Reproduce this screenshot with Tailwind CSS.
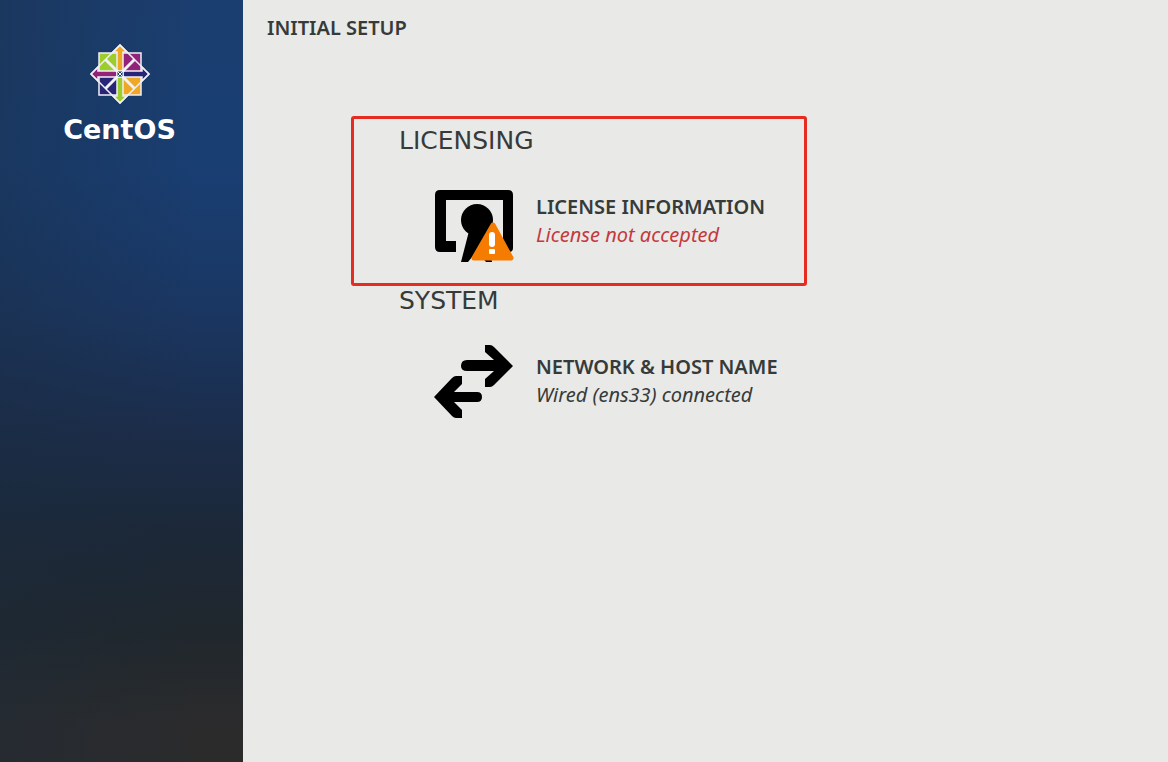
<!DOCTYPE html>
<html lang="en">
<head>
    <meta charset="UTF-8">
    <meta name="viewport" content="width=device-width, initial-scale=1.0">
    <script src="https://cdn.jsdelivr.net/npm/@tailwindcss/browser@4"></script>
    <title>Initial Setup</title>
</head>
<body class="flex min-h-screen bg-[#e9e9e7] font-['Noto_Sans','Open_Sans',sans-serif] text-[#363b3a]">
    <!-- Sidebar -->
    <aside class="w-[243px] shrink-0 bg-[linear-gradient(to_right,#1a2a3c55,#1a2a3c00_80%),linear-gradient(to_bottom,#1b3e70,#193e72_22%,#1a3763_40%,#1b2d4b_56%,#1c2838_70%,#20272d_83%,#2b2b2c_95%)]">
        <div class="flex flex-col items-center pt-11 pr-1">
            <svg class="size-[60px]" viewBox="-30 -30 60 60" aria-hidden="true">
                <g stroke="#f1f0f5" stroke-width="1.5">
                    <path fill="#9ccd2a" d="M-21-21H0V0H-21z"/>
                    <path fill="#932279" d="M0-21H21V0H0z"/>
                    <path fill="#262577" d="M-21 0H0V21H-21z"/>
                    <path fill="#efa724" d="M0 0H21V21H0z"/>
                    <!-- arrows -->
                    <path fill="#efa724" d="M0-29L7-22H3V-3H-3V-22H-7z"/>
                    <path fill="#262577" d="M29 0L22 7V3H3V-3H22V-7z"/>
                    <path fill="#9ccd2a" d="M0 29L-7 22H-3V3H3V22H7z"/>
                    <path fill="#932279" d="M-29 0L-22-7V-3H-3V3H-22V7z"/>
                    <path fill="none" d="M0-29L14-15L0-1L-14-15zM29 0L15 14L1 0L15-14zM0 29L-14 15L0 1L14 15zM-29 0L-15-14L-1 0L-15 14z"/>
                </g>
                <path fill="#1b3e70" stroke="#f1f0f5" d="M-3-3H3V3H-3z"/>
                <path stroke="#f1f0f5" d="M-3-3L3 3M3-3L-3 3"/>
            </svg>
            <span class="mt-2 font-['DejaVu_Sans',sans-serif] text-[27px] leading-9 font-bold text-white">CentOS</span>
        </div>
    </aside>

    <main class="min-w-0 flex-1 px-6 pt-[14px]">
        <h1 class="text-xl leading-7 font-semibold">INITIAL SETUP</h1>

        <div class="mt-[74px] ml-[84px] max-w-[456px]">
            <section class="rounded-[3px] border-3 border-[#e62b20] pt-2 pb-5 pl-[45px]">
                <h2 class="font-['DejaVu_Sans',sans-serif] text-[25px] leading-7">LICENSING</h2>
                <button type="button" class="mt-6 ml-[35px] flex items-center gap-[22px] text-left">
                    <svg class="h-[84px] w-20 shrink-0" viewBox="0 0 80 84" aria-hidden="true">
                        <path d="M6 11H74Q79 11 79 16V69Q79 73 75 73H69V21H12V62H22V73H6Q1 73 1 68V16Q1 11 6 11z"/>
                        <circle cx="43" cy="41" r="16"/>
                        <path d="M35 52L27 83H34L43 72L52 83H58L52 52z"/>
                        <path fill="#f57c00" stroke="#f57c00" stroke-width="5" stroke-linejoin="round" d="M59 46L77 79H40z"/>
                        <path stroke="#fff" stroke-width="6" stroke-linecap="round" d="M58 56V65"/>
                        <rect x="55" y="70" width="6" height="5" rx="1" fill="#fff"/>
                    </svg>
                    <span>
                        <span class="block text-xl leading-7 font-semibold">LICENSE INFORMATION</span>
                        <span class="block text-xl leading-7 text-[#c4393e] italic">License not accepted</span>
                    </span>
                </button>
            </section>

            <section class="pt-px pl-12">
                <h2 class="font-['DejaVu_Sans',sans-serif] text-[25px] leading-7">SYSTEM</h2>
                <button type="button" class="mt-6 ml-[35px] flex items-center gap-[22px] text-left">
                    <svg class="h-[84px] w-20 shrink-0" viewBox="0 0 80 84" aria-hidden="true">
                        <path d="M51 6H56Q58 6 60 8L79 27L60 46Q58 48 56 48H51V40L60 32H33Q27 32 27 27Q27 21 33 21H60L51 13z"/>
                        <path d="M28 37H22Q20 37 18 39L0 58L18 77Q20 79 22 79H28V71L20 63H43Q48 63 48 58Q48 53 43 53H20L28 45z"/>
                    </svg>
                    <span>
                        <span class="block text-xl leading-7 font-semibold">NETWORK &amp; HOST NAME</span>
                        <span class="block text-xl leading-7 italic">Wired (ens33) connected</span>
                    </span>
                </button>
            </section>
        </div>
    </main>
</body>
</html>
